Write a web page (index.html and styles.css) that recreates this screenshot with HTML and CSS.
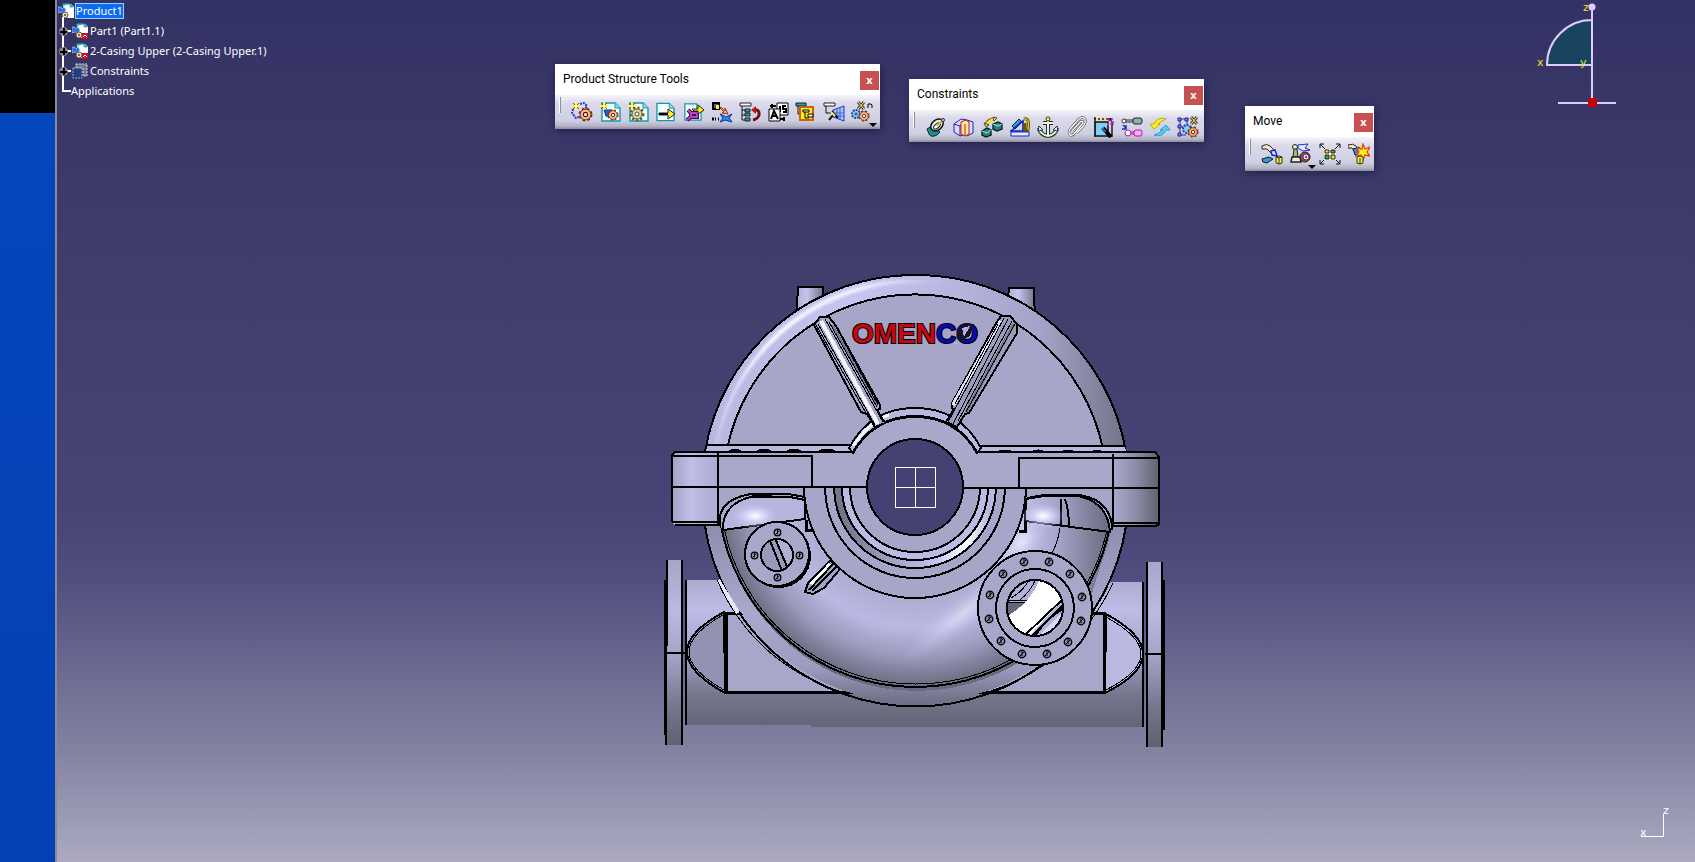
FILE: index.html
```
<!DOCTYPE html>
<html lang="en">
<head>
  <meta charset="UTF-8" />
  <meta name="viewport" content="width=device-width, initial-scale=1" />
  <title>Product1</title>
  <link rel="stylesheet" href="styles.css">
</head>
<body>

<!-- shared icon parts -->
<svg class="defs" width="0" height="0">
  <symbol id="gear" viewBox="0 0 14 14">
    <circle cx="7" cy="7" r="5" fill="currentColor" stroke="#6c2410" stroke-width="3" stroke-dasharray="2 2"/>
    <circle cx="7" cy="7" r="5" fill="currentColor" stroke="#8a3c1c" stroke-width="1"/>
    <circle cx="7" cy="7" r="2" fill="#fff" stroke="#4a1408" stroke-width="1"/>
  </symbol>
  <symbol id="spark" viewBox="0 0 8 8">
    <path d="M4 0v8M0 4h8M1 1l6 6M7 1L1 7" stroke="#6b5f20" stroke-width="1"/>
    <path d="M4 0v8M0 4h8" stroke="#fff04a" stroke-width="2"/>
    <path d="M3 3h2v2H3z" fill="#fff"/>
  </symbol>
  <symbol id="page" viewBox="0 0 20 20">
    <path d="M1 1h13l5 5v13H1z" fill="#f4ffff" stroke="#109aa8" stroke-width="1.4"/>
    <path d="M14 1v5h5" fill="#8fe4ea" stroke="#109aa8"/>
  </symbol>
  <symbol id="part" viewBox="0 0 16 16">
    <path d="M5 1h8l3 3v11H6z" fill="#fff"/>
    <path d="M5 3V1h7M12 1l3 3h-3z" fill="#20b8c0" stroke="#20b8c0"/>
    <path d="M0 4h3l1 2 2-2 2 3-2 3-3-1-3 1z" fill="#2f6fe0" stroke="#9fd0ff" stroke-width=".7"/>
    <circle cx="7" cy="12" r="3" fill="#f0dcae" stroke="#5a4630" stroke-width=".9"/>
    <circle cx="7" cy="12" r="1" fill="#5a4630"/>
  </symbol>
  <symbol id="bolt" viewBox="0 0 10 10">
    <g shape-rendering="geometricPrecision">
      <circle cx="5" cy="5" r="3.7" fill="#8f8eae" stroke="#000" stroke-width="1.4"/>
      <path d="M3 7l4-4M5 2v5" stroke="#000"/>
    </g>
  </symbol>
</svg>

<div class="screen">
  <aside class="desktop"></aside>

  <main class="canvas">
    <ul class="tree">
      <li class="root">
        <svg class="icon" viewBox="0 0 16 16"><use href="#part"/></svg>
        <span class="selected">Product1</span>
      </li>
      <li>
        <button class="node" aria-label="Expand Part1"></button>
        <svg class="icon" viewBox="0 0 16 16"><use href="#part"/><path d="M10 10h6v6h-6z" fill="#c8102a"/><path d="M11 14l2-2 2 2" stroke="#fff" fill="none"/></svg>
        <span>Part1 (Part1.1)</span>
      </li>
      <li>
        <button class="node" aria-label="Expand 2-Casing Upper"></button>
        <svg class="icon" viewBox="0 0 16 16"><use href="#part"/><path d="M10 10h6v6h-6z" fill="#c8102a"/><path d="M11 14l2-2 2 2" stroke="#fff" fill="none"/></svg>
        <span>2-Casing Upper (2-Casing Upper.1)</span>
      </li>
      <li>
        <button class="node" aria-label="Expand Constraints"></button>
        <svg class="icon" viewBox="0 0 16 16"><path d="M4 1h11v12h-4V5H4z" fill="#77758f" stroke="#ddd" stroke-dasharray="2 1"/><path d="M1 5h9v10H1z" fill="#2b3d78" stroke="#6cc4f0" stroke-dasharray="2 1"/></svg>
        <span>Constraints</span>
      </li>
      <li class="last"><span>Applications</span></li>
    </ul>

    <!-- pump assembly -->
    <svg class="pump" viewBox="660 270 510 480" shape-rendering="crispEdges">
      <defs>
        <linearGradient id="pipe" x1="0" y1="580" x2="0" y2="726" gradientUnits="userSpaceOnUse">
          <stop offset="0" stop-color="#acacd0"/><stop offset=".2" stop-color="#bcbce6"/><stop offset=".5" stop-color="#a5a5ca"/><stop offset=".78" stop-color="#76768e"/><stop offset="1" stop-color="#656578"/>
        </linearGradient>
        <linearGradient id="disc" x1="0" y1="560" x2="0" y2="746" gradientUnits="userSpaceOnUse">
          <stop offset="0" stop-color="#a6a6c8"/><stop offset=".28" stop-color="#b9b9e2"/><stop offset=".52" stop-color="#a3a3c6"/><stop offset=".8" stop-color="#74748b"/><stop offset="1" stop-color="#626274"/>
        </linearGradient>
        <linearGradient id="rim" x1="702" y1="0" x2="1130" y2="0" gradientUnits="userSpaceOnUse">
          <stop offset="0" stop-color="#b6b6de"/><stop offset=".35" stop-color="#c6c6f0"/><stop offset=".6" stop-color="#b4b4dc"/><stop offset=".8" stop-color="#a2a2c6"/><stop offset="1" stop-color="#707086"/>
        </linearGradient>
        <linearGradient id="shine" x1="715" y1="0" x2="950" y2="0" gradientUnits="userSpaceOnUse">
          <stop offset="0" stop-color="#dcdcff" stop-opacity=".2"/><stop offset=".25" stop-color="#f2f2ff"/><stop offset=".6" stop-color="#ececff"/><stop offset="1" stop-color="#c6c6f0" stop-opacity="0"/>
        </linearGradient>
        <linearGradient id="lowrim" x1="0" y1="525" x2="0" y2="703" gradientUnits="userSpaceOnUse">
          <stop offset="0" stop-color="#8e8eb0"/><stop offset=".5" stop-color="#a9a9ce"/><stop offset=".8" stop-color="#9c9cbf"/><stop offset="1" stop-color="#6e6e85"/>
        </linearGradient>
        <radialGradient id="volute" cx="915" cy="489" r="198" gradientUnits="userSpaceOnUse">
          <stop offset=".5" stop-color="#a9a8cb"/><stop offset=".7" stop-color="#b9b9e3"/><stop offset=".84" stop-color="#9c9cbf"/><stop offset="1" stop-color="#6a6a7f"/>
        </radialGradient>
        <radialGradient id="glow">
          <stop offset="0" stop-color="#fff"/><stop offset=".3" stop-color="#e4e4ff" stop-opacity=".9"/><stop offset="1" stop-color="#c0c0ee" stop-opacity="0"/>
        </radialGradient>
        <linearGradient id="bend" x1="1020" y1="0" x2="1115" y2="0" gradientUnits="userSpaceOnUse">
          <stop offset="0" stop-color="#c0c0ea"/><stop offset=".35" stop-color="#a9a9d0"/><stop offset="1" stop-color="#646476"/>
        </linearGradient>
        <linearGradient id="lugL"><stop offset="0" stop-color="#a2a2c6"/><stop offset=".4" stop-color="#bebee8"/><stop offset="1" stop-color="#acacd0"/></linearGradient>
        <linearGradient id="lugR"><stop offset="0" stop-color="#aaa9cc"/><stop offset=".5" stop-color="#8c8ca8"/><stop offset="1" stop-color="#61616f"/></linearGradient>
        <linearGradient id="stud"><stop offset="0" stop-color="#adadd2"/><stop offset=".4" stop-color="#c4c4ee"/><stop offset="1" stop-color="#72728a"/></linearGradient>
        <linearGradient id="bore" x1="842" y1="0" x2="988" y2="0" gradientUnits="userSpaceOnUse">
          <stop offset="0" stop-color="#74748c"/><stop offset=".35" stop-color="#a2a2c4"/><stop offset=".65" stop-color="#c4c4ee"/><stop offset=".85" stop-color="#fff"/><stop offset="1" stop-color="#b8b8e0"/>
        </linearGradient>
        <clipPath id="eye"><circle cx="1035" cy="608" r="28"/></clipPath>
        <clipPath id="port"><circle cx="777" cy="555" r="16"/></clipPath>
      </defs>

      <!-- suction and discharge pipe -->
      <path d="M686 580h200v100h60V582h197v145H811v-2H686z" fill="url(#pipe)"/>
      <path d="M686 580v145M1143 582v145" stroke="#000" stroke-width="2"/>
      <path d="M667 560h15v185h-16z" fill="url(#disc)"/>
      <path d="M667 560v85h-1v100M682 560v185M667 653h19" fill="none" stroke="#000" stroke-width="2"/>
      <path d="M665 580v155" stroke="#000" stroke-width="2"/>
      <path d="M1147 562h16v185h-16z" fill="url(#disc)"/>
      <path d="M1147 562v185M1162 562v185M1145 654h18" stroke="#000" stroke-width="2"/>
      <path d="M1164 580v150" stroke="#000" stroke-width="2"/>

      <!-- pipe webs -->
      <path d="M724 612Q687 632 687 652T725 693z" fill="#9492b2" stroke="#000" stroke-width="2"/>
      <path d="M723 615Q689 634 689 652T724 690" fill="none" stroke="#000"/>
      <path d="M1106 614Q1143 634 1143 654T1105 693z" fill="#b9b9e1" stroke="#000" stroke-width="2"/>
      <path d="M1106 617Q1141 636 1141 654T1106 690" fill="none" stroke="#000"/>
      <path d="M726 613h378v79H726z" fill="#a8a7ca" stroke="#000" stroke-width="3"/>

      <!-- lower casing -->
      <path d="M705 525A214 214 0 0 0 1127 525z" fill="url(#lowrim)"/>
      <path d="M705 526A213 213 0 0 0 1126 526" fill="none" stroke="#000" stroke-width="2"/>
      <path d="M718 580l20 33" stroke="#e6e6ff" stroke-width="4"/>
      <path d="M722 488V530A198 198 0 0 0 1111 530V488z" fill="url(#volute)"/>
      <path d="M1020 495h60q28 8 31 36l-22 72h-60l-40-30z" fill="url(#bend)"/>
      <ellipse cx="965" cy="612" rx="80" ry="17" fill="url(#glow)" opacity=".45" transform="rotate(-38 965 612)"/>
      <ellipse cx="1022" cy="542" rx="20" ry="34" fill="url(#glow)" opacity=".6" transform="rotate(38 1022 542)"/>
      <path d="M720 520A198 198 0 0 0 915 687A198 198 0 0 0 1111 520" fill="none" stroke="#000" stroke-width="2"/>
      <path d="M724 528A195 195 0 0 0 915 684A195 195 0 0 0 1107 530" fill="none" stroke="#000"/>
      <path d="M717 580Q755 665 845 693M1113 583Q1075 665 985 693" fill="none" stroke="#000"/>

      <!-- shoulder bosses -->
      <path d="M718 488h88v32l-83 10-5-8z" fill="#a7a6c9"/>
      <path d="M723 530Q722 503 754 496l36 1 15 3v19z" fill="#b5b5de" stroke="#000" stroke-width="2"/>
      <path d="M720 526Q716 500 751 494h37l17 3M752 497h37" fill="none" stroke="#000" stroke-width="2"/>
      <ellipse cx="755" cy="516" rx="24" ry="13" fill="url(#glow)"/>
      <path d="M1026 488h88v38l-4 6-85-11z" fill="#a7a6c9"/>
      <path d="M1025 521l1-22 18-3h34Q1108 502 1110 532z" fill="url(#bend)" stroke="#000" stroke-width="2"/>
      <path d="M1027 498l17-3h35Q1112 500 1112 530M1061 499v26M1065 499q4 12 4 28" fill="none" stroke="#000" stroke-width="2"/>
      <path d="M1060 528q-2 14-8 25" fill="none" stroke="#000"/>
      <ellipse cx="1043" cy="516" rx="22" ry="13" fill="url(#glow)"/>
      <path d="M806 520v10h6M1025 521v10h-6" fill="none" stroke="#000" stroke-width="3"/>

      <!-- lower rib -->
      <path d="M830 561l-22 22-3 9 8 2 11-6 17-20z" fill="#a2a2c5" stroke="#000" stroke-width="2"/>
      <path d="M830 564l-19 20" stroke="#fff" stroke-width="3"/>
      <path d="M833 564l-24 26M837 566l-25 25" stroke="#000" stroke-width="2"/>

      <!-- studs -->
      <path d="M798 287h25v22l-27 14z" fill="url(#stud)" stroke="#000" stroke-width="2"/>
      <path d="M1009 288h25l1 34-28-14z" fill="url(#stud)" stroke="#000" stroke-width="2"/>

      <!-- upper casing -->
      <path d="M706 452A212 212 0 0 1 1125 452z" transform="translate(0 1)" fill="none"/>
      <path d="M705 452A212 212 0 0 1 915 275A212 212 0 0 1 1126 452z" fill="url(#rim)" stroke="#000" stroke-width="2"/>
      <path d="M716 446A203 203 0 0 1 960 286" fill="none" stroke="url(#shine)" stroke-width="7" opacity=".5"/>
      <path d="M716 446A203 203 0 0 1 960 286" fill="none" stroke="url(#shine)" stroke-width="3"/>
      <path d="M727 449A192 194 0 0 1 1103 449z" fill="#a8a6c8" stroke="#000" stroke-width="2"/>
      <path d="M707 445h143l4 8H706zM981 446h143l4 8H978z" fill="#b8b8e0"/>
      <path d="M707 445h143M981 446h143" stroke="#000" stroke-width="2"/>
      <path d="M728 452q7-5 14 0M756 452q8-5 16 0M786 452q8-5 16 0M818 452q9-5 18 0M996 453q9-5 18 0M1030 453q9-5 16 0M1060 453q8-5 16 0M1090 453q7-5 14 0" fill="#8c8ba8" stroke="#000" stroke-width="2"/>

      <text class="brand" x="852" y="343" fill="#c40810">OMEN<tspan fill="#0a0ab0">CO</tspan></text>
      <path d="M957 331l7-7h10l-4 12-9 5-4-2z" fill="#14142c"/>
      <path d="M962 328l8-2-6 11zM954 341l5 3h-5z" fill="#b5b4d4"/>

      <!-- main flange -->
      <path d="M672 455l3-3h179q20-36 61-36t62 36h178l4 4v32H672z" fill="#a9a8ca"/>
      <path d="M671 487h48v38h-44l-4-3z" fill="url(#lugL)"/>
      <path d="M672 455l3-3h43v35h-46z" fill="url(#lugL)"/>
      <path d="M1113 453h43l3 4v68h-46z" fill="url(#lugR)"/>
      <path d="M849 448Q870 408 915 408t66 40l-4 5Q956 417 915 417t-62 36z" fill="#b7b7df" stroke="#000" stroke-width="2"/>
      <path d="M853 446Q870 421 889 415" fill="none" stroke="#f4f4ff" stroke-width="3"/>
      <path d="M672 522V455l3-3h178q21-36 62-36t62 36h178l4 5v67l-3 2h-45M672 522h47M675 525h44M1113 523h46" fill="none" stroke="#000" stroke-width="2"/>
      <path d="M672 456h140v31M1159 458h-140v30M718 453v72M1113 454v72" fill="none" stroke="#000" stroke-width="2"/>

      <!-- bearing bore -->
      <path d="M804 487a111 111 0 0 0 222 0z" fill="#a8a6c8"/>
      <path d="M804 487a111 111 0 0 0 222 0" fill="none" stroke="#000" stroke-width="2"/>
      <path d="M834 487a81 81 0 0 0 162 0z" fill="#b0b0d6"/>
      <path d="M838 487a77 77 0 0 0 154 0" fill="none" stroke="url(#bore)" stroke-width="8"/>
      <path d="M846 487a69 69 0 0 0 138 0" fill="none" stroke="#bbbbe4" stroke-width="7"/>
      <path d="M850 487a65 65 0 0 0 130 0z" fill="#a8a6c8"/>
      <path d="M825 487a90 91 0 0 0 180 0M834 487a81 81 0 0 0 162 0M842 487a73 73 0 0 0 146 0M850 487a65 65 0 0 0 130 0" fill="none" stroke="#000" stroke-width="2"/>
      <path d="M672 487h200M960 488h199" stroke="#000" stroke-width="2"/>
      <circle cx="915" cy="487" r="48" fill="#454273" stroke="#000" stroke-width="2"/>
      <path d="M895 467h40v40h-40zM915 467v40M895 487h40" fill="none" stroke="#fff"/>

      <!-- upper ribs -->
      <path d="M814 325l6-8h9l7 9 44 79v4l-3 1 8 13-10 4-8-13-6-2z" fill="#a5a4c6" stroke="#000" stroke-width="2"/>
      <path d="M821 321l57 103" stroke="#f4f4ff" stroke-width="4"/>
      <path d="M832 325l44 78" stroke="#777690" stroke-width="3"/>
      <path d="M818 324l57 101M825 319l58 103M816 325l50 88M835 325l43 80M829 322l48 85" stroke="#000"/>
      <path d="M1017 324l-7-8h-9l-6 9-43 78v5l2 1-8 13 11 5 8-13 4-1 48-80z" fill="#9c9bbc" stroke="#000" stroke-width="2"/>
      <path d="M1001 321l-48 84" stroke="#e2e2fa" stroke-width="4"/>
      <path d="M1014 324l-48 88" stroke="#77768f" stroke-width="3"/>
      <path d="M1004 318l-56 104M1008 319l-55 105M1012 321l-54 100M998 324l-43 80M1016 322l-50 90" stroke="#000"/>

      <!-- small port -->
      <circle cx="779" cy="556" r="31" fill="#7a7993" stroke="#000" stroke-width="2"/>
      <circle cx="777" cy="554" r="32" fill="#a9a8cb" stroke="#000" stroke-width="2"/>
      <circle cx="777" cy="555" r="16" fill="#9a99b9"/>
      <path d="M775 538h18v30h-6z" fill="#b0b0d3" clip-path="url(#port)"/>
      <path d="M769 538l13 33M775 538l13 31" stroke="#000" stroke-width="2" clip-path="url(#port)"/>
      <circle cx="777" cy="555" r="16" fill="none" stroke="#000" stroke-width="2"/>
      <use href="#bolt" x="773" y="528" width="9" height="9"/><use href="#bolt" x="795" y="551" width="9" height="9"/>
      <use href="#bolt" x="773" y="573" width="9" height="9"/><use href="#bolt" x="750" y="551" width="9" height="9"/>

      <!-- drive port -->
      <circle cx="1035" cy="608" r="57" fill="#a8a7ca" stroke="#000" stroke-width="2"/>
      <circle cx="1035" cy="608" r="39" fill="#a8a7ca" stroke="#000" stroke-width="2"/>
      <g clip-path="url(#eye)">
        <path d="M1005 578h60v60h-60z" fill="#b2b2d8"/>
        <path d="M1004 602h22v14h-22z" fill="#66657a" stroke="#000"/>
        <path d="M1007 600h20M1011 598q14-8 20-22M1020 600q12-10 16-22" stroke="#000" fill="none"/>
        <path d="M1009 615q22-13 31-36l25 14-5 9-34 38-22-8z" fill="#fff"/>
        <path d="M1064 598l-40 38M1064 604l-34 34M1064 608q-20 12-30 30" stroke="#000" stroke-width="2" fill="none"/>
        <path d="M1062 612l-22 22q20 2 22-22z" fill="#d8d8f8"/>
      </g>
      <circle cx="1035" cy="608" r="28" fill="none" stroke="#000" stroke-width="2"/>
      <use href="#bolt" x="1019" y="557" width="10" height="10"/><use href="#bolt" x="1044" y="557" width="10" height="10"/>
      <use href="#bolt" x="1065" y="569" width="10" height="10"/><use href="#bolt" x="1077" y="592" width="10" height="10"/>
      <use href="#bolt" x="1076" y="616" width="10" height="10"/><use href="#bolt" x="1063" y="637" width="10" height="10"/>
      <use href="#bolt" x="1042" y="649" width="10" height="10"/><use href="#bolt" x="1017" y="649" width="10" height="10"/>
      <use href="#bolt" x="996" y="636" width="10" height="10"/><use href="#bolt" x="984" y="614" width="10" height="10"/>
      <use href="#bolt" x="985" y="590" width="10" height="10"/><use href="#bolt" x="998" y="569" width="10" height="10"/>
    </svg>

    <section class="toolbar structure">
      <header><h2>Product Structure Tools</h2><button class="close" aria-label="Close">x</button></header>
      <div class="tools">
        <button aria-label="Component"><svg viewBox="0 0 22 22"><path d="M2 8l-1 4 4 5 3-1M9 3l4-1 3 3-2 3" fill="none" stroke="#2038c8" stroke-width="2" stroke-dasharray="2 1"/><use href="#gear" x="7" y="6" width="15" height="15" color="#f5c08a"/><use href="#spark" x="1" y="1" width="8" height="8"/></svg></button>
        <button aria-label="Product"><svg viewBox="0 0 22 22"><use href="#page" x="2" y="1" width="20" height="20"/><path d="M5 9l2 6 4 1 2-7z" fill="#2b5fd0" stroke="#102a88"/><use href="#gear" x="8" y="8" width="12" height="12" color="#f5c08a"/><use href="#spark" x="1" y="1" width="8" height="8"/></svg></button>
        <button aria-label="Part"><svg viewBox="0 0 22 22"><use href="#page" x="2" y="1" width="20" height="20"/><g><circle cx="10" cy="13" r="6" fill="#d8d090" stroke="#5c5838" stroke-width="3" stroke-dasharray="2 2"/><circle cx="10" cy="13" r="5" fill="#e0d89c" stroke="#6c6840"/><circle cx="10" cy="13" r="2" fill="#fff" stroke="#444"/></g><use href="#spark" x="1" y="1" width="8" height="8"/></svg></button>
        <button aria-label="Existing Component"><svg viewBox="0 0 22 22"><use href="#page" x="1" y="1" width="19" height="20"/><path d="M4 12h9V8l7 5-7 5v-4H4z" fill="#ffee20" stroke="#15203c"/><path d="M4 13h9" stroke="#000" stroke-width="2"/></svg></button>
        <button aria-label="Existing Component With Positioning"><svg viewBox="0 0 22 22"><use href="#page" x="1" y="1" width="18" height="20"/><path d="M4 19l5-4M8 12h6v4H8zM8 12L5 9" fill="none" stroke="#400848" stroke-width="4"/><path d="M4 19l5-4M8 12h6v4H8zM8 12L5 9" fill="none" stroke="#c040c8" stroke-width="2"/><path d="M9 8h6V4l6 5-6 4v-3h-4z" fill="#ffee20" stroke="#222"/></svg></button>
        <button aria-label="Replace Component"><svg viewBox="0 0 22 22"><path d="M2 2h6v6H2z" fill="#5050d8" stroke="#000" stroke-width="2"/><path d="M5 4h3v4H5z" fill="#ffee20"/><path d="M10 6l4 4v-3l3 6-6-1 2-1-4-4z" fill="#ffb070" stroke="#a03010"/><path d="M1 18h2m1 0h1m2 0h1" stroke="#000" stroke-width="3"/><path d="M9 13l6 3 6-3-3 4 3 4-7-2-5 2 3-4z" fill="#1a9cd8" stroke="#1020b0"/></svg></button>
        <button aria-label="Graph Tree Reordering"><svg viewBox="0 0 22 22"><path d="M1 2h11v3H1z" fill="#fff" stroke="#222"/><path d="M3 5v14M3 9h3M3 14h3M3 19h3" stroke="#111" fill="none"/><path d="M6 8h5v3H6zM6 12h5v3H6zM6 17h5v3H6z" fill="#3a9c96" stroke="#123"/><path d="M14 9q7-1 6 5-1 4-6 5" fill="none" stroke="#6e1010" stroke-width="3"/><path d="M12 9l5-4v8z" fill="#c01818"/></svg></button>
        <button aria-label="Generate Numbering"><svg viewBox="0 0 22 22"><path d="M10 2h11v12H10z" fill="#fff" stroke="#000"/><path d="M13 5v6M19 5h-3v3h3v3h-3" stroke="#000" stroke-width="2" fill="none"/><path d="M2 8h11v12H2z" fill="#fff" stroke="#000"/><path d="M4 18l3-8 4 8M6 15h4M3 5h6M5 3v4M13 18h5M17 16v4" stroke="#000" stroke-width="2" fill="none"/></svg></button>
        <button aria-label="Selective Load"><svg viewBox="0 0 22 22"><path d="M1 2h10v3H1z" fill="#25a39a" stroke="#123"/><path d="M3 5v8h4" stroke="#111" fill="none"/><path d="M5 6h13v13H5z" fill="#ffee20" stroke="#d06010" stroke-width="2"/><path d="M8 9h6v2H8zM13 13h5v3h-5z" fill="#fff" stroke="#000"/><path d="M10 11v6h4" stroke="#000" fill="none"/></svg></button>
        <button aria-label="Manage Representations"><svg viewBox="0 0 22 22"><path d="M1 2h11v3H1z" fill="#fff" stroke="#222"/><path d="M3 5v7h5" stroke="#111" fill="none"/><path d="M10 9l11-4v15l-11-4z" fill="#a7c2f5" stroke="#2038c0"/><path d="M14 8v10M17 7v12M10 12h11M10 15h11" stroke="#4060d8"/><path d="M6 19l5-6-2-3M11 13l4 4" stroke="#111" stroke-width="2" fill="none"/><path d="M8 11l4 4" stroke="#ffee60" stroke-width="2"/></svg></button>
        <button class="more" aria-label="Fast Multi-Instantiation"><svg viewBox="0 0 22 22"><circle cx="5" cy="13" r="4" fill="#8cc8f4" stroke="#1850a8" stroke-width="2" stroke-dasharray="2 1"/><circle cx="5" cy="13" r="1" fill="#fff" stroke="#103070"/><use href="#gear" x="7" y="9" width="12" height="12" color="#f5c08a"/><path d="M7 1l6 7M13 1L7 8" stroke="#4c4030" stroke-width="3"/><path d="M7 1l6 7M13 1L7 8" stroke="#ffe88a"/><path d="M17 7V3h3l1 1v3" stroke="#000" fill="none"/></svg></button>
      </div>
    </section>

    <section class="toolbar constraints">
      <header><h2>Constraints</h2><button class="close" aria-label="Close">x</button></header>
      <div class="tools">
        <button aria-label="Coincidence"><svg viewBox="0 0 22 22"><path d="M2 13l5-3 8 6-3 3q-6 3-8-1z" fill="#1c8e88" stroke="#123"/><ellipse cx="12" cy="9" rx="7" ry="5" transform="rotate(-40 12 9)" fill="#d7f0ee" stroke="#111" stroke-width="1.5"/><ellipse cx="12" cy="10" rx="4" ry="2" transform="rotate(-40 12 10)" fill="#fff" stroke="#111"/><path d="M12 10l7-7" stroke="#d8c020" stroke-width="2"/><circle cx="18" cy="4" r="1.5" fill="#ffee20" stroke="#22a"/></svg></button>
        <button aria-label="Contact"><svg viewBox="0 0 22 22"><path d="M1 8l7-5 6 1v14l-7 2-6-4zM14 4l6 2v11l-6 3" fill="#dcdcf8" stroke="#2020b8"/><path d="M1 8l6 2v10M7 10l7-4" fill="none" stroke="#2020b8"/><path d="M8 6l5-2 3 2v12l-4 2-4-2z" fill="#ffe9a0" stroke="#c01818"/><path d="M12 8v12" stroke="#c01818"/></svg></button>
        <button aria-label="Offset"><svg viewBox="0 0 22 22"><path d="M1 15l5-3 4 2v5l-5 2-4-2zM12 8l5-2 4 2v5l-5 2-4-2z" fill="#1b8580" stroke="#111" stroke-width="1.3"/><path d="M1 15l5 2 4-3M12 8l5 2 4-2" fill="none" stroke="#9ee"/><path d="M5 8q3-5 8-5" fill="none" stroke="#716100" stroke-width="3"/><path d="M5 9q3-5 8-6" fill="none" stroke="#ffee20" stroke-width="2"/><path d="M3 7l2 4 3-2zM12 1l1 4 3-3z" fill="#ffee20" stroke="#444"/></svg></button>
        <button aria-label="Angle"><svg viewBox="0 0 22 22"><path d="M3 10l7-7 3 3-7 7z" fill="#2b9ad0" stroke="#123"/><path d="M1 15h19M2 15L14 5v10" fill="none" stroke="#1020c0" stroke-width="1.6"/><path d="M2 16h18v4H2z" fill="#e4f0ff" stroke="#1020c0"/><path d="M15 3q6-2 4 11h-3V7" fill="none" stroke="#665a00" stroke-width="3"/><path d="M15 3q6-2 4 11" fill="none" stroke="#ffee20"/></svg></button>
        <button aria-label="Fix Component"><svg viewBox="0 0 22 22"><path d="M11 5v14M6 7h10M2 12q1 7 9 8 8-1 9-8" fill="none" stroke="#18343a" stroke-width="4"/><path d="M11 5v14M6 7h10M2 13q2 6 9 7 7-1 9-7" fill="none" stroke="#f4f4d0" stroke-width="2"/><circle cx="11" cy="3" r="2" fill="#fff04a" stroke="#333"/><path d="M1 15l1-5 4 4zM21 15l-1-5-4 4z" fill="#d8f0ee" stroke="#18343a"/></svg></button>
        <button aria-label="Fix Together"><svg viewBox="0 0 22 22"><path d="M7 15l8-9q3-2 3 1l-9 11q-4 3-5-1 0-3 2-5l8-9q4-3 6 0 1 3-1 6l-7 8" fill="none" stroke="#333" stroke-width="2.4"/><path d="M7 15l8-9q3-2 3 1l-9 11q-4 3-5-1 0-3 2-5l8-9q4-3 6 0 1 3-1 6l-7 8" fill="none" stroke="#fff" stroke-width="1.4"/></svg></button>
        <button aria-label="Quick Constraint"><svg viewBox="0 0 22 22"><path d="M2 6h13v14H2z" fill="#80d0f4" stroke="#111" stroke-width="1.5"/><path d="M2 1v20M1 3h16M19 5v16" stroke="#222" stroke-width="1.5"/><path d="M3 3h12" stroke="#ffee20" stroke-width="2" stroke-dasharray="2 2"/><path d="M13 3h3v2h3V2m-5 6h7M15 8v3m5-6v3" stroke="#c030c0" stroke-width="1.5" stroke-dasharray="2 1"/><path d="M10 12l8 9" stroke="#000" stroke-width="4"/><path d="M9 12l4 4" stroke="#40608a" stroke-width="2"/></svg></button>
        <button aria-label="Flexible Sub-Assembly"><svg viewBox="0 0 22 22"><path d="M4 4h9v2H4z" fill="#ccdcdc" stroke="#333"/><rect x="12" y="2" width="9" height="6" rx="2" fill="#8cb0ae" stroke="#222"/><circle cx="3" cy="5" r="2" fill="#fff" stroke="#333"/><path d="M2 9l3 3M5 9v4H1" stroke="#1828d0" stroke-width="1.5" fill="none"/><path d="M7 16h7v2H7z" fill="#f4b0ea" stroke="#a010a0"/><rect x="13" y="14" width="8" height="6" rx="2" fill="#f4b0ea" stroke="#c010c0"/><circle cx="7" cy="17" r="3" fill="#fff" stroke="#c010c0"/></svg></button>
        <button aria-label="Change Constraint"><svg viewBox="0 0 22 22"><path d="M17 3q-8-3-12 5H1l4 5 6-5H9q3-3 8-5z" fill="#ffee20" stroke="#bcae10"/><path d="M5 19q8 3 12-5h4l-4-5-6 5h3q-3 3-9 5z" fill="#55cff0" stroke="#2aa0c8"/></svg></button>
        <button aria-label="Reuse Pattern"><svg viewBox="0 0 22 22"><path d="M3 3v16M10 3v14M3 3h9M3 11h8M3 19h6" stroke="#2828b0"/><path d="M1 2h3v3H1zM8 2h3v3H8zM1 9h3v3H1zM1 17h3v3H1z" fill="#7888f0" stroke="#2020a0"/><circle cx="10" cy="13" r="4" fill="#8cc8f4" stroke="#1850a8" stroke-width="2" stroke-dasharray="2 1"/><use href="#gear" x="10" y="10" width="12" height="12" color="#f5b070"/><path d="M14 1l6 7M20 1l-6 7" stroke="#4c4030" stroke-width="3"/><path d="M14 1l6 7M20 1l-6 7" stroke="#ffe88a"/></svg></button>
      </div>
    </section>

    <section class="toolbar move">
      <header><h2>Move</h2><button class="close" aria-label="Close">x</button></header>
      <div class="tools">
        <button aria-label="Manipulation"><svg viewBox="0 0 22 22"><path d="M1 3q5-3 8 0l5 5-3 3-5-5H1z" fill="#fbe6cf" stroke="#222"/><path d="M10 8l4-1 2 6-5-1z" fill="#dce6ff" stroke="#1828d0" stroke-width="1.5"/><path d="M1 16l7-2 4 2-6 4-4-1z" fill="#30a0c0" stroke="#114"/><path d="M15 14l3-1 3 1v6l-3 1-3-1z" fill="#ffee20" stroke="#333"/><path d="M15 14l3 1 3-1M18 15v6" stroke="#333" fill="none"/></svg></button>
        <button class="more" aria-label="Snap"><svg viewBox="0 0 22 22"><path d="M8 2l10-1-3 4 5 2-7 1-5-3z" fill="#e8ecff" stroke="#1828d0"/><circle cx="5" cy="4" r="2.5" fill="#e9f0b0" stroke="#222"/><path d="M4 6h3l1 8H3z" fill="#9cc080" stroke="#222"/><path d="M2 14h8l1 5H1z" fill="#f0f0e0" stroke="#222" stroke-width="1.5"/><circle cx="15" cy="14" r="5" fill="#7e5454" stroke="#222"/><circle cx="16" cy="14" r="3" fill="#d8e8ff" stroke="#a01818"/><circle cx="16" cy="14" r="1" fill="#22a"/></svg></button>
        <button aria-label="Explode"><svg viewBox="0 0 22 22"><path d="M1 1l20 20M21 1L1 21M1 5V1h4M17 1h4v4M21 17v4h-4M5 21H1v-4" stroke="#111" fill="none"/><path d="M5 6h12v11H5z" fill="#ffffd0"/><path d="M6 7h4v3H6zM12 12h4v4h-4z" fill="#f3dd40" stroke="#222"/><path d="M12 7h4v3h-4zM6 12h4v4H6z" fill="#2ca07a" stroke="#222"/></svg></button>
        <button aria-label="Stop On Clash"><svg viewBox="0 0 22 22"><path d="M0 2q5-2 8 1l3 4-3 3-4-5H0z" fill="#fbe6cf" stroke="#222"/><path d="M5 6l6-2 2 7-6 1z" fill="#3a80e0" stroke="#123"/><path d="M15 1l2 5 5-2-3 5 3 4-5-1-2 5-2-5-5 1 3-4-2-4 5 1z" fill="#ffee20" stroke="#e04a10" stroke-width="1.3"/><path d="M9 14l3-1 3 1v6l-3 1-3-1zM12 15v6" fill="#ffee20" stroke="#333"/></svg></button>
      </div>
    </section>

    <!-- compass -->
    <svg class="compass" viewBox="1530 0 95 110">
      <path d="M1592 20A45 45 0 0 0 1547 65h45z" fill="#18445f"/>
      <path d="M1592 103V7M1592 20A45 45 0 0 0 1547 65h45M1558 103h58" fill="none" stroke="#dcccff" stroke-width="2"/>
      <circle cx="1592" cy="7" r="3.5" fill="#dcccff"/>
      <path d="M1588 98h9v9h-9z" fill="#cc0000"/>
      <text x="1583" y="11">z</text><text x="1537" y="66">x</text><text x="1580" y="66">y</text>
    </svg>

    <svg class="axis" viewBox="1636 802 40 38">
      <path d="M1641 836h22V814" fill="none" stroke="#fff" shape-rendering="crispEdges"/>
      <text x="1663" y="814">z</text><text x="1640" y="836">x</text>
    </svg>
  </main>
</div>

</body>
</html>
```
FILE: styles.css
```
html, body {
  margin: 0; padding: 0; height: 100%;
  font-family: "Noto Sans", "Open Sans", sans-serif;
  overflow: hidden;
}
.defs { position: absolute; }
.screen {
  display: flex;
  height: 100vh;
}
.desktop {
  width: 55px;
  flex: none;
  background: linear-gradient(#000 113px, #0546bd 113px, #0443b8 60%, #0440b5);
}
.canvas {
  flex: 1;
  position: relative;
  overflow: hidden;
  border-left: 2px solid #8a8995;
  background: linear-gradient(#333264, #403d6d 30%, #484576 60%, #504e7e 67%, #8482a1 87%, #abaac1);
}

/* specification tree */
.tree {
  list-style: none;
  margin: 0; padding: 1px 0 0 1px;
  color: #fff;
  font-size: 11px;
  line-height: 14px;
}
.tree li {
  display: flex;
  align-items: center;
  height: 20px;
  gap: 2px;
  position: relative;
  padding-left: 14px;
}
.tree li::before {
  content: "";
  position: absolute;
  left: 4px; top: 0;
  width: 2px; height: 20px;
  background: #fff;
}
.tree li::after {
  content: "";
  position: absolute;
  left: 4px; top: 9px;
  width: 9px; height: 2px;
  background: #fff;
}
.tree .root { padding-left: 0; }
.tree .root::before { top: 16px; height: 4px; }
.tree .root::after { display: none; }
.tree .last { padding-left: 13px; }
.tree .last::before { height: 10px; }
.tree .icon { width: 16px; height: 16px; flex: none; }
.tree .selected {
  background: #0a6cf0;
  outline: 1px solid #9cc8ff;
}
.node {
  position: absolute;
  left: 1px; top: 6px;
  z-index: 1;
  width: 9px; height: 9px;
  padding: 0;
  border: 0;
  border-radius: 50%;
  background:
    linear-gradient(#000, #000) center / 7px 2px no-repeat,
    linear-gradient(#000, #000) center / 2px 7px no-repeat,
    #85848c;
}

/* model */
.pump {
  position: absolute;
  left: 603px; top: 270px;
  width: 510px; height: 480px;
}
.brand {
  font: bold 28px "Liberation Sans", Arial, sans-serif;
  stroke: #000;
  stroke-width: 2px;
  paint-order: stroke;
}

/* floating toolbars */
.toolbar {
  position: absolute;
  background: #fff;
  box-shadow: 1px 2px 8px rgba(10, 8, 40, .5);
}
.structure { left: 498px; top: 64px; }
.constraints { left: 852px; top: 79px; }
.move { left: 1188px; top: 106px; }
.toolbar header {
  display: flex;
  justify-content: space-between;
  align-items: flex-start;
  height: 31px;
}
.toolbar h2 {
  margin: 0;
  padding: 6px 0 0 8px;
  font: 12px/18px Roboto, "Open Sans", sans-serif;
  color: #000;
}
.close {
  width: 19px; height: 19px;
  margin: 7px 1px 0 0;
  padding: 0 0 3px;
  border: 0;
  background: #c75050;
  color: #fff;
  font: bold 11px "Open Sans", sans-serif;
}
.tools {
  display: flex;
  gap: 6px;
  height: 34px;
  box-sizing: border-box;
  padding: 6px 7px 0 16px;
  position: relative;
  background: linear-gradient(#f6f5fb, #dadaeb 25%, #cfcfe3 75%, #b2b2c4 92%, #8a8a9c);
}
.constraints .tools { height: 32px; padding-right: 5px; }
.move .tools { gap: 7px; padding-right: 4px; }
.tools::before {
  content: "";
  position: absolute;
  left: 4px; top: 2px;
  width: 1px; height: 16px;
  background: #fff;
  border-right: 1px solid #8e8e9e;
}
.tools button {
  width: 22px; height: 22px;
  padding: 0;
  border: 0;
  background: none;
  position: relative;
}
.tools svg { display: block; width: 22px; height: 22px; }
.tools .more::after {
  content: "";
  position: absolute;
  right: -4px; bottom: -4px;
  border: 4px solid transparent;
  border-top-color: #000;
  border-bottom: 0;
}

.compass {
  position: absolute;
  right: 70px; top: 0;
  width: 95px; height: 110px;
}
.axis {
  position: absolute;
  right: 19px; bottom: 22px;
  width: 40px; height: 38px;
}
.compass text, .axis text {
  font: 11px "DejaVu Sans", sans-serif;
  fill: #f0e820;
}
.axis text { fill: #fff; }
```
